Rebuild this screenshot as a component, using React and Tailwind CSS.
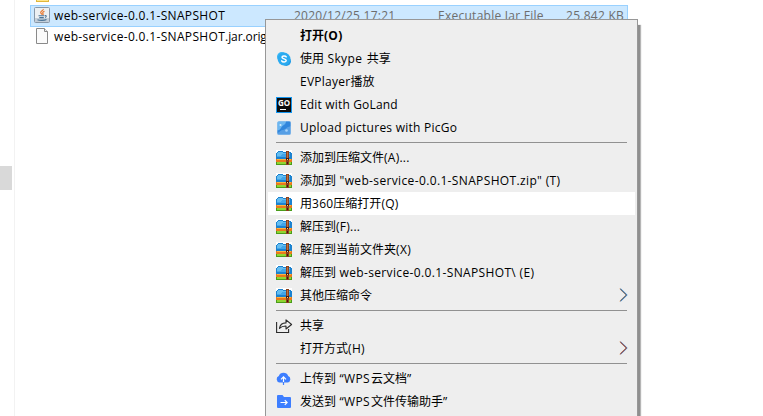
const cjk = "font-['Open_Sans','Noto_Sans_CJK_SC',sans-serif]";

function JavaFile() {
  return (
    <svg className="mb-[2px]" width="16" height="16" viewBox="0 0 16 16">
      <rect x=".5" y=".5" width="15" height="15" rx="1" fill="#eceff2" stroke="#8797a8" />
      <path d="M1 11h14v4H1z" fill="#c3ced9" />
      <path d="M9.300 2c.4 1.600-3.300 2-2.600 3.800.3.900 1.200 1 1.300 2M10.500 4.300C8.800 4.800 8.300 5.700 9 6.500c.4.500.2 1-.2 1.500" fill="none" stroke="#e8772e" strokeWidth="1.200" />
      <path d="M4.500 8.800h6M5.300 10.600h4.500M11 8.600c1.800-.3 1.600 1.500 0 1.900M3.500 12.700c2 .9 7 .9 9-.2" fill="none" stroke="#4a7396" strokeWidth="1.100" />
    </svg>
  );
}
function BlankFile() {
  return (
    <svg className="mb-[2px]" width="12" height="16" viewBox="0 0 12 16">
      <path d="M.5.500h8l3 3v12H.5z" fill="#fbfbfb" stroke="#8a8a8a" />
      <path d="M8.500.500v3h3" fill="#eee" stroke="#8a8a8a" />
    </svg>
  );
}
function Skype() {
  return (
    <svg width="16" height="16" viewBox="0 0 16 16">
      <circle cx="5.800" cy="5.800" r="4.800" fill="#35b5f5" />
      <circle cx="10.200" cy="10.200" r="4.800" fill="#1f9be6" />
      <circle cx="8" cy="8" r="6.400" fill="#2aaaf0" />
      <path d="M10.200 5.900C9.500 4.500 6 4.500 6 6.300c0 2 4.200 1.200 4.200 3.300 0 1.900-3.700 1.900-4.500.3" fill="none" stroke="#fff" strokeWidth="1.500" strokeLinecap="round" />
    </svg>
  );
}
function GoLand() {
  return (
    <div className="flex h-4 w-4 flex-col border border-[#1496f0] bg-[#0c0c0c] pl-px font-['Open_Sans',sans-serif] text-[8px] leading-[9px] font-bold text-white">
      <span className="h-[11px]">GO</span>
      <span className="ml-[2px] h-px w-[6px] shrink-0 bg-white" />
    </div>
  );
}
function PicGo() {
  return (
    <svg width="14" height="14" viewBox="0 0 14 14">
      <rect x=".5" y=".5" width="13" height="13" rx="1.500" fill="#4a9ae6" />
      <path d="M1 .5h8C8.500 4 4 4.500 4 8.500L.5 10V1z" fill="#6cb6f0" />
      <path d="M9 .5h4.500v5C10 5.500 9 8.500 6 9S2 12 .5 12V9.500C4 9 4 5.500 6.500 4.500S9 2 9 .5z" fill="#3186dc" />
      <path d="M13.500 5.500v8H.5V12C2 12 3 9.500 6 9s4-3.500 7.500-3.500z" fill="#579fe5" />
      <circle cx="3.500" cy="4" r="1" fill="#d5efff" />
      <circle cx="9.500" cy="9.500" r="1.300" fill="#a9d4fa" />
    </svg>
  );
}
function Zip() {
  return (
    <svg width="16" height="16" viewBox="0 0 16 16" shapeRendering="crispEdges">
      <path d="M0 0h16v15H0z" fill="#fff" />
      <path d="M0 3l2-2h4l1 1h7l2 2v6H0z" fill="#1c82cf" />
      <path d="M1 3l1-1h4l1 1h7v1H6L4 6H1z" fill="#64bdf0" />
      <path d="M1 6h3l2-2h8v3H1z" fill="#42a5e8" />
      <path d="M0 9h16v3H0z" fill="#e9791c" />
      <path d="M1 9h14v1H1z" fill="#ffb23e" />
      <path d="M0 12h16v3H0z" fill="#4a9c1b" />
      <path d="M1 12h14v2H1z" fill="#8fd532" />
      <path d="M10 1h3v14h-3z" fill="#8b421d" />
      <path d="M11 2h1v6h-1z" fill="#bc7040" />
      <path d="M10 8h3v2h-3zM11 12h1v2h-1z" fill="#4d160c" />
      <path d="M11 9h1v1h-1z" fill="#f5d98a" />
    </svg>
  );
}
function Share() {
  return (
    <svg width="17" height="16" viewBox="0 0 17 16" fill="none" stroke="#2b2b2b" strokeWidth="1.100">
      <path d="M.6 4v10.500h12V11" />
      <path d="M3.500 10.500c.4-3.500 2.500-5.500 6.500-5.600V1.800L15.600 6.500 10 11V8c-3-.1-4.800.6-6.500 2.500z" strokeLinejoin="round" />
    </svg>
  );
}
function Cloud() {
  return (
    <svg width="16" height="15" viewBox="0 0 16 15">
      <path d="M3.500 11.500A3.400 3.400 0 0 1 2.800 5 5 5 0 0 1 12.200 5a3.400 3.400 0 0 1-.6 6.500z" fill="#3d7eff" />
      <path d="M7.500 11v3" stroke="#3d7eff" strokeWidth="1.200" />
      <path d="M7.500 11V6M5 8.300l2.500-2.500L10 8.300" fill="none" stroke="#fff" strokeWidth="1.200" />
    </svg>
  );
}
function SendFolder() {
  return (
    <svg width="14" height="13" viewBox="0 0 14 13">
      <path d="M0 1q0-1 1-1h4.500L7 2h6q1 0 1 1v9q0 1-1 1H1q-1 0-1-1z" fill="#3d7eff" />
      <path d="M3.500 7.500h6.500M7.800 5.200l2.300 2.300-2.300 2.300" fill="none" stroke="#fff" strokeWidth="1.200" />
    </svg>
  );
}
function Arrow({ color }) {
  return (
    <svg className="mr-[7px] mb-[2px] ml-auto" width="9" height="14" viewBox="0 0 9 14" fill="none">
      <path d="M.6 .8L7 7 .6 13.200" stroke="#e9a56c" strokeWidth=".9" />
      <path d="M1.900 .8L8.300 7 1.900 13.200" stroke="#58a8ee" strokeWidth=".9" />
      <path d="M1.200 .8L7.600 7 1.200 13.200" stroke={color} strokeWidth="1" />
    </svg>
  );
}

function Item({ icon, children, active, bold, arrow }) {
  return (
    <div className={`flex h-[23px] shrink-0 items-center pl-2 ${active ? "bg-white" : ""}`}>
      <span className="flex w-6 shrink-0 items-center">{icon}</span>
      <span className={`text-[12px] leading-[18px] whitespace-pre ${bold ? "font-bold" : ""}`}>{children}</span>
      {arrow && <Arrow color={arrow} />}
    </div>
  );
}
function Latin({ children }) {
  return <span className="tracking-[0.25px]">{children}</span>;
}
function Wide({ children }) {
  return <span className="tracking-[0.36px]">{children}</span>;
}
function Separator() {
  return <div className="mt-[3px] mr-2 mb-[3px] ml-2 h-px shrink-0 bg-[#919191]" />;
}

export default function App() {
  return (
    <div className={`relative flex h-[416px] w-[763px] overflow-hidden bg-white text-black ${cjk}`}>
      <div className="flex w-[15px] shrink-0 border-r border-[#f2f2f2] pt-[166px]">
        <div className="h-6 w-3 bg-[#d9d9d9]" />
      </div>
      <div className="w-[613px] pl-[15px]">
        <div className="h-[5px] pl-[6px]">
          <div className="h-[2px] w-[13px] border-x border-b border-[#e0b73c] bg-[#ffe58c]" />
        </div>
        <div className="flex h-[22px] items-center border border-[#99d1ff] bg-[#cce8ff] pl-[3px] text-[12px] whitespace-nowrap">
          <JavaFile />
          <span className="ml-1 w-[240px] tracking-[0.33px]">web-service-0.0.1-SNAPSHOT</span>
          <span className="w-[144px] tracking-[0.25px] text-[#6d6d6d]">2020/12/25 17:21</span>
          <span className="tracking-[0.26px] text-[#6d6d6d]">Executable Jar File</span>
          <span className="mr-[3px] ml-auto tracking-[0.25px] text-[#6d6d6d]">25,842 KB</span>
        </div>
        <div className="flex h-[20px] items-center pl-[6px] text-[12px] whitespace-nowrap">
          <BlankFile />
          <span className="ml-[6px] tracking-[0.33px]">web-service-0.0.1-SNAPSHOT<span className="tracking-[-0.1px]">.jar.original</span></span>
        </div>
      </div>

      <div className="absolute top-[25px] left-[270px] h-[400px] w-[370px] bg-[#8f8f8f] shadow-[1px_0_1px_#b5b5b5]" />
      <div className="absolute top-[19px] left-[265px] flex h-[410px] w-[373px] flex-col border border-[#979797] bg-[#eeeeee] px-[2px] pt-1">
        <Item bold>打开<Latin>(O)</Latin></Item>
        <Item icon={<Skype />}>使用<Wide> Skype </Wide><span className="ml-[1px]">共享</span></Item>
        <Item><Latin>EVPlayer</Latin>播放</Item>
        <Item icon={<GoLand />}><span className="tracking-[0.17px]">Edit with GoLand</span></Item>
        <Item icon={<span className="pl-px"><PicGo /></span>}><Latin>Upload pictures with PicGo</Latin></Item>
        <Separator />
        <Item icon={<Zip />}>添加到压缩文件<Latin>(A)...</Latin></Item>
        <Item icon={<Zip />}>添加到<Wide> "web-service-0.0.1-SNAPSHOT.zip" (T)</Wide></Item>
        <Item icon={<Zip />} active>用<Latin>360</Latin>压缩打开<Latin>(Q)</Latin></Item>
        <Item icon={<Zip />}>解压到<Latin>(F)...</Latin></Item>
        <Item icon={<Zip />}>解压到当前文件夹<Wide>(X)</Wide></Item>
        <Item icon={<Zip />}>解压到<Wide> web-service-0.0.1-SNAPSHOT\ (E)</Wide></Item>
        <Item icon={<Zip />} arrow="#24486f">其他压缩命令</Item>
        <Separator />
        <Item icon={<Share />}>共享</Item>
        <Item arrow="#6b1f2a">打开方式<Wide>(H)</Wide></Item>
        <Separator />
        <Item icon={<Cloud />}>上传到<Wide> “WPS</Wide><span className="ml-px">云文档”</span></Item>
        <Item icon={<span className="pl-px"><SendFolder /></span>}>发送到<Wide> “WPS</Wide><span className="ml-px">文件传输助手”</span></Item>
      </div>
    </div>
  );
}
